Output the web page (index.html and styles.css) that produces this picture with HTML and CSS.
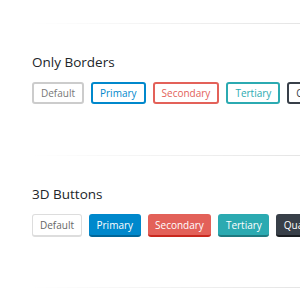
FILE: index.html
```html
<!DOCTYPE html>
<html>
<head>
<meta charset="utf-8">
<link rel="stylesheet" href="styles.css">
</head>
<body>
<div class="page">
  <hr class="divider">
  <section class="section">
    <h4 class="title">Only Borders</h4>
    <div class="row">
      <button class="btn bd bd-default">Default</button>
      <button class="btn bd bd-primary">Primary</button>
      <button class="btn bd bd-secondary">Secondary</button>
      <button class="btn bd bd-tertiary">Tertiary</button>
      <button class="btn bd bd-quaternary">Quaternary</button>
    </div>
  </section>
  <hr class="divider">
  <section class="section">
    <h4 class="title">3D Buttons</h4>
    <div class="row row3d">
      <button class="btn d3 d3-default">Default</button>
      <button class="btn d3 d3-primary">Primary</button>
      <button class="btn d3 d3-secondary">Secondary</button>
      <button class="btn d3 d3-tertiary">Tertiary</button>
      <button class="btn d3 d3-quaternary">Quaternary</button>
    </div>
  </section>
  <hr class="divider">
</div>
</body>
</html>
```
FILE: styles.css
```css
html, body {
  margin: 0;
  padding: 0;
  background: #fff;
  overflow: hidden;
}
body {
  font-family: "Open Sans", "Noto Sans", sans-serif;
  color: #212529;
}
.page {
  width: 300px;
  height: 300px;
  overflow: hidden;
  display: flex;
  flex-direction: column;
}
.divider {
  border: 0;
  margin: 23px 0 0 0;
  height: 1px;
  flex: none;
  background: linear-gradient(to right, rgba(0,0,0,0) 10%, rgba(0,0,0,0.1) 100%);
}
.section {
  padding-left: 32px;
  display: flex;
  flex-direction: column;
}
.title {
  margin: 28px 0 0 0;
  font-size: 13.5px;
  line-height: 20px;
  font-weight: 400;
  color: #212529;
}
.row {
  display: flex;
  gap: 7px;
  margin-top: 10px;
  white-space: nowrap;
  margin-bottom: 28px;
}
.btn {
  flex: none;
  font-family: "Open Sans", "Noto Sans", sans-serif;
  font-size: 10px;
  line-height: 14px;
  border-radius: 3px;
  background: #fff;
  cursor: pointer;
}
.bd {
  border: 2px solid;
  padding: 2px 7px;
}
.bd-default { border-color: #ccc; color: #777; }
.bd-primary { border-color: #0088cc; color: #0088cc; }
.bd-secondary { border-color: #e36159; color: #e36159; }
.bd-tertiary { border-color: #2baab1; color: #2baab1; }
.bd-quaternary { border-color: #383f48; color: #383f48; }

.row3d { gap: 7px; margin-bottom: 27px; }
.d3 {
  border: 0;
  border-bottom: 2px solid;
  padding: 4px 7.5px 3px;
  color: #fff;
}
.d3-default { background: #fff; color: #666; border: 1px solid #ddd; border-bottom: 2px solid #ddd; padding: 3px 7px 3px; }
.d3-primary { background: #0088cc; border-bottom-color: #006699; }
.d3-secondary { background: #e36159; border-bottom-color: #c9281e; }
.d3-tertiary { background: #2baab1; border-bottom-color: #1f7a80; }
.d3-quaternary { background: #383f48; border-bottom-color: #1a1d21; }
```
